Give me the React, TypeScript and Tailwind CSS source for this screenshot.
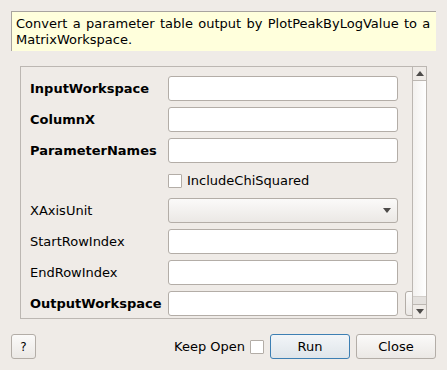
import React from "react";

const font = { fontFamily: '"DejaVu Sans", Verdana, sans-serif' };

function TextBox() {
  return <div className="w-[230px] h-[25px] shrink-0 rounded-[3px] border border-[#b3ada7] bg-white" />;
}

function Row({ label, bold, children }: { label: string; bold?: boolean; children: React.ReactNode }) {
  return (
    <div className="flex items-center h-[25px]">
      <div className={`w-[138px] shrink-0 whitespace-nowrap ${bold ? "font-bold" : ""}`}>{label}</div>
      {children}
    </div>
  );
}

function Check() {
  return <div className="w-[14px] h-[14px] shrink-0 border border-[#b3ada7] bg-white rounded-[1px]" />;
}

function Triangle({ up }: { up?: boolean }) {
  return (
    <svg width="8" height="5" viewBox="0 0 8 5">
      <path d={up ? "M0 5 L4 0 L8 5 Z" : "M0 0 L8 0 L4 5 Z"} fill="#4d4b49" />
    </svg>
  );
}

export default function App() {
  return (
    <div
      className="w-[447px] h-[370px] bg-[#efebe7] text-[13px] leading-[16px] text-black overflow-hidden flex flex-col pt-[11px] px-[11px]"
      style={font}
    >
      <div className="h-[40px] border-t border-l border-[#a8a49f] bg-[#ffffdc] pl-[4px] pt-[4px] whitespace-nowrap">
        <span className="[word-spacing:1.2px]">Convert a parameter table output by PlotPeakByLogValue to a</span>
        <br />
        MatrixWorkspace.
      </div>

      <div className="mt-[15px] ml-[9px] w-[407px] h-[253px] border border-[#bcb7b2] flex">
        <div className="flex-1 overflow-hidden pl-[9px] pt-[9px] flex flex-col gap-[6px]">
          <Row label="InputWorkspace" bold>
            <TextBox />
          </Row>
          <Row label="ColumnX" bold>
            <TextBox />
          </Row>
          <Row label="ParameterNames" bold>
            <TextBox />
          </Row>
          <div className="flex items-center h-[23px] pl-[138px] gap-[5px]">
            <Check />
            <span>IncludeChiSquared</span>
          </div>
          <Row label="XAxisUnit">
            <div className="w-[230px] h-[25px] shrink-0 rounded-[3px] border border-[#b3ada7] bg-gradient-to-b from-[#fbfaf9] to-[#ebe8e5] flex items-center justify-end pr-[6px]">
              <Triangle />
            </div>
          </Row>
          <Row label="StartRowIndex">
            <TextBox />
          </Row>
          <Row label="EndRowIndex">
            <TextBox />
          </Row>
          <Row label="OutputWorkspace" bold>
            <TextBox />
            <div className="ml-[7px] w-[24px] h-[25px] shrink-0 rounded-[3px] border border-[#b3ada7] bg-gradient-to-b from-[#fbfaf9] to-[#ebe8e5]" />
          </Row>
        </div>
        <div className="w-[14px] shrink-0 border-l border-[#bcb7b2] flex flex-col bg-[#e4e1de]">
          <div className="h-[14px] shrink-0 border-b border-[#bcb7b2] bg-[#efebe7] flex items-center justify-center">
            <Triangle up />
          </div>
          <div className="h-[216px] shrink-0 bg-gradient-to-r from-[#f3f1ef] to-[#ffffff] border-b border-[#d3cfcb]" />
          <div className="flex-1" />
          <div className="h-[14px] shrink-0 border-t border-[#bcb7b2] bg-[#efebe7] flex items-center justify-center">
            <Triangle />
          </div>
        </div>
      </div>

      <div className="mt-[15px] flex items-center h-[25px]">
        <div className="w-[25px] h-[25px] rounded-[3px] border border-[#b3ada7] bg-gradient-to-b from-[#fbfaf9] to-[#ebe8e5] flex items-center justify-center text-[12px]">
          ?
        </div>
        <div className="flex-1" />
        <span className="mr-[5px]">Keep Open</span>
        <Check />
        <div className="ml-[6px] w-[80px] h-[25px] rounded-[3px] border border-[#3d7fb3] bg-gradient-to-b from-[#f2f5f8] to-[#dfe5ea] flex items-center justify-center">
          Run
        </div>
        <div className="ml-[6px] w-[80px] h-[25px] rounded-[3px] border border-[#b3ada7] bg-gradient-to-b from-[#fbfaf9] to-[#ebe8e5] flex items-center justify-center">
          Close
        </div>
      </div>
    </div>
  );
}
